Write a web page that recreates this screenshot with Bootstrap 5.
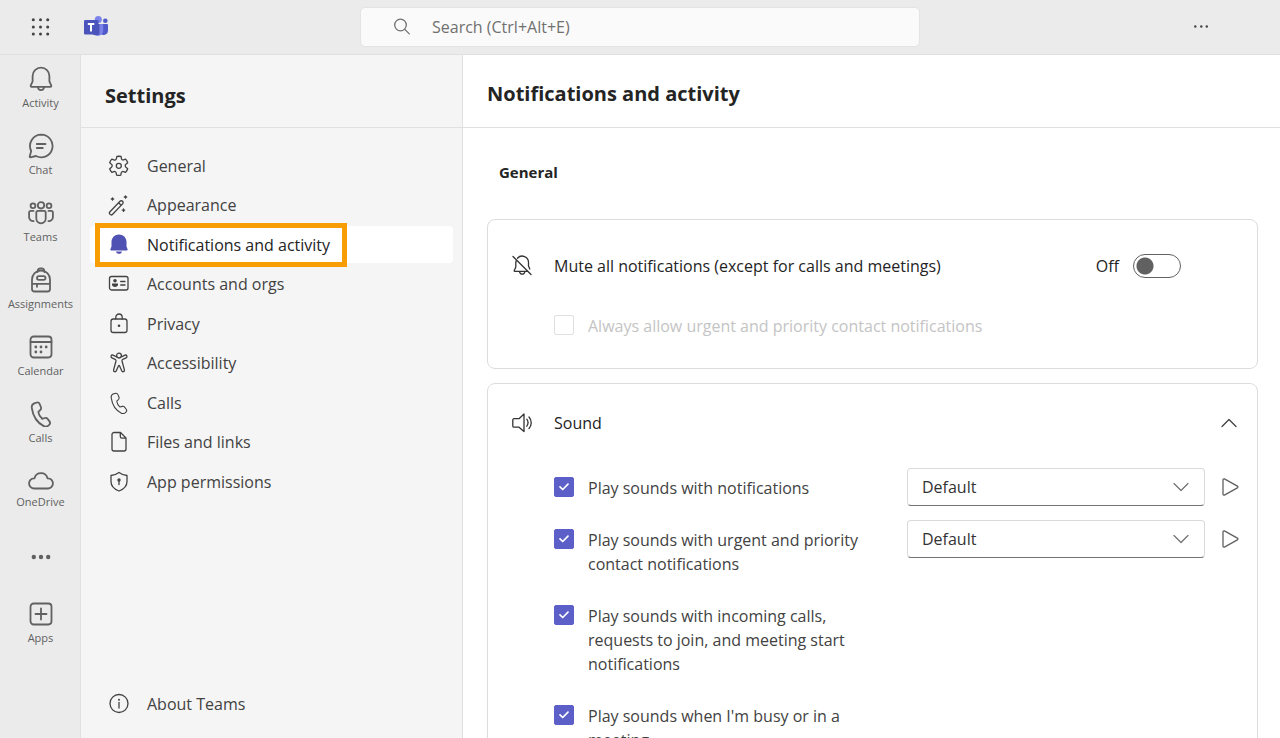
<!DOCTYPE html>
<html lang="en">
<head>
<meta charset="utf-8">
<meta name="viewport" content="width=device-width, initial-scale=1">
<title>Settings - Notifications and activity</title>
<link href="https://cdn.jsdelivr.net/npm/bootstrap@5.3.0/dist/css/bootstrap.min.css" rel="stylesheet">
<style>
  body { font: 16px/24px "Open Sans", "Noto Sans", sans-serif; color: #242424; background: #fff; }
  svg { fill: none; stroke: currentColor; stroke-width: 1.3; stroke-linecap: round; stroke-linejoin: round; flex: none; display: block; }
  .solid { fill: currentColor; stroke: none; }
  .plain-btn { background: none; border: 0; padding: 0; color: #424242; }
  .app-top { height: 55px; flex: none; background: #ebebeb; border-bottom: 1px solid #e0e0e0; display: grid; grid-template-columns: 1fr 560px 1fr; }
  .search-box { height: 40px; background: #fafafa; border: 1px solid #e3e3e3; border-radius: 5px; gap: 21px; padding: 0 32px; color: #707070; }
  .search-box input { border: 0; background: none; outline: 0; padding: 0; }
  .search-box input::placeholder { color: #707070; opacity: 1; }
  .rail { width: 81px; flex: none; background: #ebebeb; border-right: 1px solid #e0e0e0; padding: 1px 0 0 1px; color: #616161; }
  .rail svg { stroke-width: 1.8; }
  .rail .solid { stroke-width: 0; }
  .rail-item { display: flex; flex-direction: column; align-items: center; gap: 3px; padding: 10px 0 12px; color: inherit; text-decoration: none; font-size: 11px; line-height: 16px; }
  .rail-item.tight { gap: 0; }
  .rail-more { height: 69px; display: flex; align-items: center; justify-content: center; color: inherit; }
  .side { width: 382px; flex: none; background: #f5f5f5; border-right: 1px solid #e0e0e0; }
  .pane-head { height: 73px; flex: none; padding: 0 24px; border-bottom: 1px solid #e0e0e0; display: flex; align-items: center; }
  .pane-head h1, .pane-head h2 { font-size: 20px; line-height: 28px; font-weight: 700; margin: 0; }
  .side-head { padding-top: 10px; }
  .main-head { padding-top: 6px; }
  .side-nav { padding: 19px 9px 0; min-height: 372px; justify-content: space-between; }
  .side-link { height: 37px; display: flex; align-items: center; gap: 17px; padding-left: 18px; color: #424242; text-decoration: none; border-radius: 4px; position: relative; }
  .side-link.current { background: #fff; color: #242424; }
  .side-link.current svg { color: #4f52b2; }
  .callout { position: absolute; left: 5px; top: -3px; bottom: -4px; width: 252px; border: 5px solid #f99d05; }
  .side-foot { padding: 0 9px 16px; }
  .main-body { overflow-y: auto; padding: 32px 22px 24px 24px; }
  .main-body::-webkit-scrollbar { display: none; }
  .main-body h3 { font-size: 15px; line-height: 24px; font-weight: 700; margin: 0 0 35px 12px; }
  .set-card { border: 1px solid #dcdcdc; border-radius: 8px; padding: 0 18px 0 24px; margin-bottom: 14px; }
  .card-line { display: flex; align-items: center; gap: 22px; }
  .card-line > svg { color: #333; }
  .mute-card { padding-top: 34px; padding-bottom: 22px; }
  .mute-switch { margin-right: 58px; }
  .sound-card { padding-top: 27px; padding-bottom: 24px; }
  .tick { appearance: none; width: 20px; height: 20px; flex: none; margin: 0; border: 1px solid #e0e0e0; border-radius: 2px; background: #fff; }
  .tick:checked { border-color: #5b5fc7; background: #5b5fc7 url("data:image/svg+xml,%3Csvg xmlns='http://www.w3.org/2000/svg' viewBox='0 0 20 20'%3E%3Cpath d='M6 9.8l2.700 2.700 5.300-5.300' fill='none' stroke='white' stroke-width='1.700' stroke-linecap='round' stroke-linejoin='round'/%3E%3C/svg%3E") center/20px no-repeat; }
  .opt { display: flex; align-items: flex-start; padding-left: 42px; }
  .opt .tick { margin-top: 9px; }
  .opt label { width: 280px; margin-left: 14px; padding: 8px 0; color: #424242; }
  .opt label.off { width: auto; color: #c4c4c4; }
  .mute-opt { padding-top: 28px; }
  .opt-list { gap: 12px; padding-top: 33px; }
  .switch { appearance: none; width: 48px; height: 24px; border: 1px solid #616161; border-radius: 12px; margin: 0 0 0 14px; background: radial-gradient(circle at 11px 11px, #616161 8px, transparent 9px); }
  .sound-pick { appearance: none; width: 298px; height: 38px; border: 1px solid #dadada; border-bottom-color: #737373; border-radius: 4px; padding: 0 14px; color: #333; background: #fff url("data:image/svg+xml,%3Csvg xmlns='http://www.w3.org/2000/svg' viewBox='0 0 16 10'%3E%3Cpath d='M1 1.5l7 7 7-7' fill='none' stroke='%23707070' stroke-width='1.200' stroke-linecap='round' stroke-linejoin='round'/%3E%3C/svg%3E") right 15px center/16px 10px no-repeat; }
  .play { height: 38px; color: #616161; }
</style>
</head>
<body>
<div class="d-flex flex-column vh-100 overflow-hidden">
  <header class="app-top align-items-center">
    <div class="d-flex align-items-center">
      <button class="plain-btn ms-4 ps-1" aria-label="App launcher">
        <svg class="solid" width="26" height="26" viewBox="0 0 26 26"><g><circle cx="5.300" cy="5.700" r="1.500"/><circle cx="12.500" cy="5.700" r="1.500"/><circle cx="19.700" cy="5.700" r="1.500"/><circle cx="5.300" cy="12.900" r="1.500"/><circle cx="12.500" cy="12.900" r="1.500"/><circle cx="19.700" cy="12.900" r="1.500"/><circle cx="5.300" cy="20.100" r="1.500"/><circle cx="12.500" cy="20.100" r="1.500"/><circle cx="19.700" cy="20.100" r="1.500"/></g></svg>
      </button>
      <a href="#" class="ms-4 ps-1" aria-label="Microsoft Teams">
        <svg class="solid" width="26" height="26" viewBox="0 0 26 26">
          <circle cx="23.300" cy="6.800" r="2.300" fill="#5059c9"/>
          <path d="M18 10h7a1 1 0 0 1 1 1v5.500a4.500 4.500 0 0 1-8 2.800z" fill="#5059c9"/>
          <circle cx="16.300" cy="5.500" r="3.500" fill="#7b83eb"/>
          <path d="M10 10h10.200a1 1 0 0 1 1 1v6.300a5.700 5.700 0 0 1-11.200 0z" fill="#7b83eb"/>
          <path d="M10 10h7.500v9.500a1.500 1.500 0 0 1-1.500 1.500h-5z" fill="#35398d" opacity=".6"/>
          <rect x="2" y="6" width="14.500" height="14.500" rx="1.300" fill="#4b53bc"/>
          <path d="M5.800 9h6.500v1.900H10v6.500H8v-6.500H5.800z" fill="#fff"/>
        </svg>
      </a>
    </div>
    <div class="search-box d-flex align-items-center">
      <svg width="18" height="18" viewBox="0 0 18 18"><circle cx="7.500" cy="7" r="5.800"/><path d="M11.800 11.400l4.500 4.500"/></svg>
      <input type="search" class="flex-grow-1" placeholder="Search (Ctrl+Alt+E)" aria-label="Search">
    </div>
    <button class="plain-btn ms-auto me-5 pe-4" aria-label="Settings and more">
      <svg class="solid" width="14" height="6" viewBox="0 0 14 6"><circle cx="1.300" cy="2.500" r="1.200"/><circle cx="7.300" cy="2.500" r="1.200"/><circle cx="12.800" cy="2.500" r="1.200"/></svg>
    </button>
  </header>

  <div class="d-flex flex-grow-1 overflow-hidden">
    <nav class="rail" aria-label="Apps">
      <a href="#" class="rail-item"><svg width="26" height="26" viewBox="0 0 26 26"><path d="M13 1.700c-4.700 0-8.400 3.600-8.400 8.200v5.400L2.700 19.600c-.200.600.200 1.200.800 1.200h19c.600 0 1-.600.800-1.200l-1.900-4.300V9.900c0-4.600-3.700-8.200-8.400-8.200zM9.900 21c.200 1.900 1.500 3.200 3.100 3.200s2.900-1.300 3.100-3.200"/></svg>Activity</a>
      <a href="#" class="rail-item"><svg width="26" height="26" viewBox="0 0 26 26"><path d="M13.300 1.700A11.300 11.300 0 1 1 8 23l-5.600 1.300a.600.600 0 0 1-.700-.700L3.200 18A11.300 11.300 0 0 1 13.300 1.700zM8.800 11h8.700M8.800 15h6"/></svg>Chat</a>
      <a href="#" class="rail-item"><svg width="26" height="26" viewBox="0 0 26 26"><circle cx="13" cy="5.300" r="3.200"/><circle cx="5" cy="5.800" r="2.400"/><circle cx="21" cy="5.800" r="2.400"/><path d="M10 10.900h6a1.700 1.700 0 0 1 1.700 1.700v6a4.700 4.700 0 0 1-9.400 0v-6A1.700 1.700 0 0 1 10 10.900zM5.500 10.900H2.800a1.700 1.700 0 0 0-1.700 1.700v4.600a4.100 4.100 0 0 0 4.500 4M20.500 10.900h2.700a1.700 1.700 0 0 1 1.700 1.700v4.600a4.100 4.100 0 0 1-4.500 4"/></svg>Teams</a>
      <a href="#" class="rail-item"><svg width="26" height="26" viewBox="0 0 26 26"><path d="M9.600 5V4A2.700 2.700 0 0 1 12.300 1.300h1.400A2.700 2.700 0 0 1 16.400 4v1M4 12.500a9 9 0 0 1 18 0V22a2.500 2.500 0 0 1-2.500 2.500h-13A2.500 2.500 0 0 1 4 22zM4 16.800h18M9 16.800v3"/><rect x="9" y="9.200" width="8.500" height="3.600" rx="1.800"/></svg>Assignments</a>
      <a href="#" class="rail-item"><svg width="26" height="26" viewBox="0 0 26 26"><rect x="2.500" y="2.500" width="21" height="21" rx="3.200"/><path d="M2.500 8h21"/><g class="solid"><circle cx="7.800" cy="13" r="1.400"/><circle cx="13" cy="13" r="1.400"/><circle cx="18.200" cy="13" r="1.400"/><circle cx="7.800" cy="18" r="1.400"/><circle cx="13" cy="18" r="1.400"/></g></svg>Calendar</a>
      <a href="#" class="rail-item"><svg width="26" height="26" viewBox="0 0 26 26"><path d="M6.800 2.100l1.800-.5c1.300-.4 2.600.3 3.100 1.500l1.200 2.900c.4 1 .2 2.200-.6 3l-2 1.900c.4 2.700 1.700 5 3.900 6.900l2.600-.8c1-.3 2.200 0 2.800.9l1.900 2.500c.8 1.100.6 2.500-.3 3.400l-.6.600c-1.300 1.200-3.200 1.500-4.800.7C9.300 21.800 5.200 16.500 3.800 7c-.3-2.200 1-4.300 3-4.900z"/></svg>Calls</a>
      <a href="#" class="rail-item tight"><svg width="26" height="26" viewBox="0 0 26 26"><path d="M6.300 20.500a5.100 5.100 0 0 1-.3-10.200h.5a6.700 6.700 0 0 1 13 0h.5a5.100 5.100 0 0 1-.3 10.200z"/></svg>OneDrive</a>
      <button class="plain-btn rail-more w-100" aria-label="View more apps"><svg class="solid" width="20" height="6" viewBox="0 0 20 6"><circle cx="2.800" cy="3" r="2.200"/><circle cx="10" cy="3" r="2.200"/><circle cx="17.200" cy="3" r="2.200"/></svg></button>
      <a href="#" class="rail-item"><svg width="26" height="26" viewBox="0 0 26 26"><rect x="2.500" y="2.500" width="21" height="21" rx="3.200"/><path d="M13 7.500v11M7.500 13h11"/></svg>Apps</a>
    </nav>

    <aside class="side d-flex flex-column">
      <div class="pane-head side-head"><h1>Settings</h1></div>
      <nav class="side-nav d-flex flex-column" aria-label="Settings">
        <a href="#" class="side-link"><svg width="22" height="22" viewBox="0 0 22 22"><path d="M8.900 1.500a9.600 9.600 0 0 1 4.200 0l.4 2.300c.2.900 1.100 1.400 2 1.100l2.100-.8a9.600 9.600 0 0 1 2.100 3.600L17.900 9.300a1.900 1.900 0 0 0 0 2.900l1.800 1.500a9.600 9.600 0 0 1-2.100 3.700l-2.100-.8a1.700 1.700 0 0 0-2.300 1.300l-.4 2.200a9.600 9.600 0 0 1-4.200 0l-.4-2.200a1.700 1.700 0 0 0-2.300-1.300l-2.100.8a9.600 9.600 0 0 1-2.100-3.700l1.800-1.500a1.900 1.900 0 0 0 0-2.900L1.700 7.700a9.600 9.600 0 0 1 2.100-3.600l2.100.8a1.700 1.700 0 0 0 2.400-1.100z"/><circle cx="10.800" cy="10.800" r="2.500"/></svg>General</a>
        <a href="#" class="side-link"><svg width="22" height="22" viewBox="0 0 22 22"><path d="M2 17.800L12 7.300a1.800 1.800 0 0 1 2.600 2.600L4.600 20.300A1.800 1.800 0 0 1 2 17.800zM10.600 8.800l2.500 2.500M4.500 3.800v2.400M3.300 5h2.400M17.500 1.800v2.400M16.300 3h2.400M15.500 15v2.400M14.300 16.200h2.400"/></svg>Appearance</a>
        <a href="#" class="side-link current" aria-current="page"><svg class="solid" width="22" height="22" viewBox="0 0 22 22"><path d="M11 .500c-4.200 0-7.500 3.200-7.500 7.300v4.800l-1.100 2.700c-.3.700.1 1.200.8 1.200h15.600c.7 0 1.100-.5.800-1.200l-1.100-2.700V7.800C18.500 3.700 15.200.500 11 .500zM8 17.400h6c-.3 1.400-1.500 2.300-3 2.300S8.300 18.800 8 17.400z"/></svg>Notifications and activity<span class="callout"></span></a>
        <a href="#" class="side-link"><svg width="22" height="22" viewBox="0 0 22 22"><rect x="1.500" y="3.500" width="18.500" height="13.500" rx="2"/><path d="M12.700 8.500h4.300M12.700 12h4.300"/><g class="solid"><circle cx="7" cy="7.800" r="1.800"/><path d="M4 10.500h6v1c0 1.500-1.300 2.500-3 2.500s-3-1-3-2.500z"/></g></svg>Accounts and orgs</a>
        <a href="#" class="side-link"><svg width="22" height="22" viewBox="0 0 22 22"><rect x="3" y="6" width="16" height="13.500" rx="2.300"/><path d="M7.800 6V4.200a3.200 3.200 0 0 1 6.400 0V6"/><circle class="solid" cx="11" cy="12.800" r="1.300"/></svg>Privacy</a>
        <a href="#" class="side-link"><svg width="22" height="22" viewBox="0 0 22 22"><circle cx="11" cy="3.600" r="2.400"/><path d="M8.600 4.800L5 3.200c-1.800-.7-2.900 1.700-1.100 2.600l3.300 1.600c.7.300.9.900.8 1.600L5.600 17.800c-.5 2 2 2.700 2.700 1l2.200-5c.2-.5.800-.5 1 0l2.200 5c.7 1.700 3.200 1 2.700-1L14 9c-.1-.7.100-1.300.8-1.600l3.300-1.600c1.800-.9.700-3.300-1.100-2.600l-3.600 1.600"/></svg>Accessibility</a>
        <a href="#" class="side-link"><svg width="22" height="22" viewBox="0 0 26 26"><path d="M6.800 2.100l1.800-.5c1.300-.4 2.600.3 3.100 1.500l1.200 2.900c.4 1 .2 2.200-.6 3l-2 1.900c.4 2.700 1.700 5 3.900 6.900l2.600-.8c1-.3 2.200 0 2.800.9l1.900 2.500c.8 1.100.6 2.500-.3 3.400l-.6.600c-1.300 1.200-3.200 1.500-4.800.7C9.300 21.800 5.200 16.500 3.800 7c-.3-2.200 1-4.300 3-4.900z"/></svg>Calls</a>
        <a href="#" class="side-link"><svg width="22" height="22" viewBox="0 0 22 22"><path d="M6 1.500h6.500L18 7v11a2 2 0 0 1-2 2H6a2 2 0 0 1-2-2V3.500a2 2 0 0 1 2-2zM12.300 1.800V5.500A1.600 1.600 0 0 0 13.900 7.100h3.800"/></svg>Files and links</a>
        <a href="#" class="side-link"><svg width="22" height="22" viewBox="0 0 22 22"><path d="M11 1.500c2.400 1.800 4.900 2.700 8 3v6c0 4.500-2.700 7.500-8 9.500-5.300-2-8-5-8-9.500v-6c3.100-.3 5.600-1.200 8-3zM11 10v3.500"/><circle class="solid" cx="11" cy="9" r="1.700"/></svg>App permissions</a>
      </nav>
      <div class="side-foot mt-auto">
        <a href="#" class="side-link"><svg width="22" height="22" viewBox="0 0 22 22"><circle cx="11" cy="10.500" r="9"/><path d="M11 9.500v5.500"/><circle class="solid" cx="11" cy="6.700" r="1"/></svg>About Teams</a>
      </div>
    </aside>

    <main class="d-flex flex-column flex-grow-1">
      <div class="pane-head main-head"><h2>Notifications and activity</h2></div>
      <div class="main-body flex-grow-1">
        <h3>General</h3>
        <section class="set-card mute-card">
          <div class="card-line">
            <svg width="20" height="22" viewBox="0 0 20 22"><path d="M1 1.500l18 18M5.500 3.200A6.300 6.300 0 0 1 16.500 7.500V11l1.300 3M4.300 5.500a6 6 0 0 0-.5 2.400v4L2.200 15.700c-.1.400.1.700.5.700h13.200M7.500 16.600c.3 1.600 1.300 2.600 2.700 2.600s2.400-1 2.700-2.600"/></svg>
            <label for="mute">Mute all notifications (except for calls and meetings)</label>
            <div class="mute-switch d-flex align-items-center ms-auto">
              <span>Off</span>
              <input type="checkbox" role="switch" id="mute" class="switch">
            </div>
          </div>
          <div class="opt mute-opt">
            <input type="checkbox" class="tick" id="urgent" disabled>
            <label class="off" for="urgent">Always allow urgent and priority contact notifications</label>
          </div>
        </section>
        <section class="set-card sound-card">
          <div class="card-line">
            <svg width="20" height="22" viewBox="0 0 20 22"><path d="M12 2v17.500l-5-4.300H2a1.200 1.200 0 0 1-1.200-1.200V8A1.200 1.200 0 0 1 2 6.700h5zM14.800 7.200a6 6 0 0 1 0 7M17 5a8.500 8.500 0 0 1 0 11.500"/></svg>
            <span>Sound</span>
            <button class="plain-btn ms-auto" aria-label="Collapse"><svg width="20" height="10" viewBox="0 0 20 10"><path d="M3 8.500l7-7 7 7"/></svg></button>
          </div>
          <div class="opt-list d-flex flex-column">
            <div class="opt">
              <input type="checkbox" class="tick" id="s1" checked><label for="s1">Play sounds with notifications</label>
              <select class="sound-pick ms-auto" aria-label="Notification sound"><option>Default</option></select>
              <button class="plain-btn play ms-3" aria-label="Play sound"><svg width="18" height="20" viewBox="0 0 18 20"><path d="M2 2.800v14.400c0 .8.800 1.200 1.400.9l13-7.200c.7-.4.7-1.400 0-1.800l-13-7.200C2.800 1.600 2 2 2 2.800z"/></svg></button>
            </div>
            <div class="opt">
              <input type="checkbox" class="tick" id="s2" checked><label for="s2">Play sounds with urgent and priority contact notifications</label>
              <select class="sound-pick ms-auto" aria-label="Urgent notification sound"><option>Default</option></select>
              <button class="plain-btn play ms-3" aria-label="Play sound"><svg width="18" height="20" viewBox="0 0 18 20"><path d="M2 2.800v14.400c0 .8.800 1.200 1.400.9l13-7.200c.7-.4.7-1.400 0-1.800l-13-7.200C2.800 1.600 2 2 2 2.800z"/></svg></button>
            </div>
            <div class="opt">
              <input type="checkbox" class="tick" id="s3" checked><label for="s3">Play sounds with incoming calls, requests to join, and meeting start notifications</label>
            </div>
            <div class="opt">
              <input type="checkbox" class="tick" id="s4" checked><label for="s4">Play sounds when I'm busy or in a meeting</label>
            </div>
          </div>
        </section>
      </div>
    </main>
  </div>
</div>
<script src="https://cdn.jsdelivr.net/npm/bootstrap@5.3.0/dist/js/bootstrap.bundle.min.js"></script>
</body>
</html>
